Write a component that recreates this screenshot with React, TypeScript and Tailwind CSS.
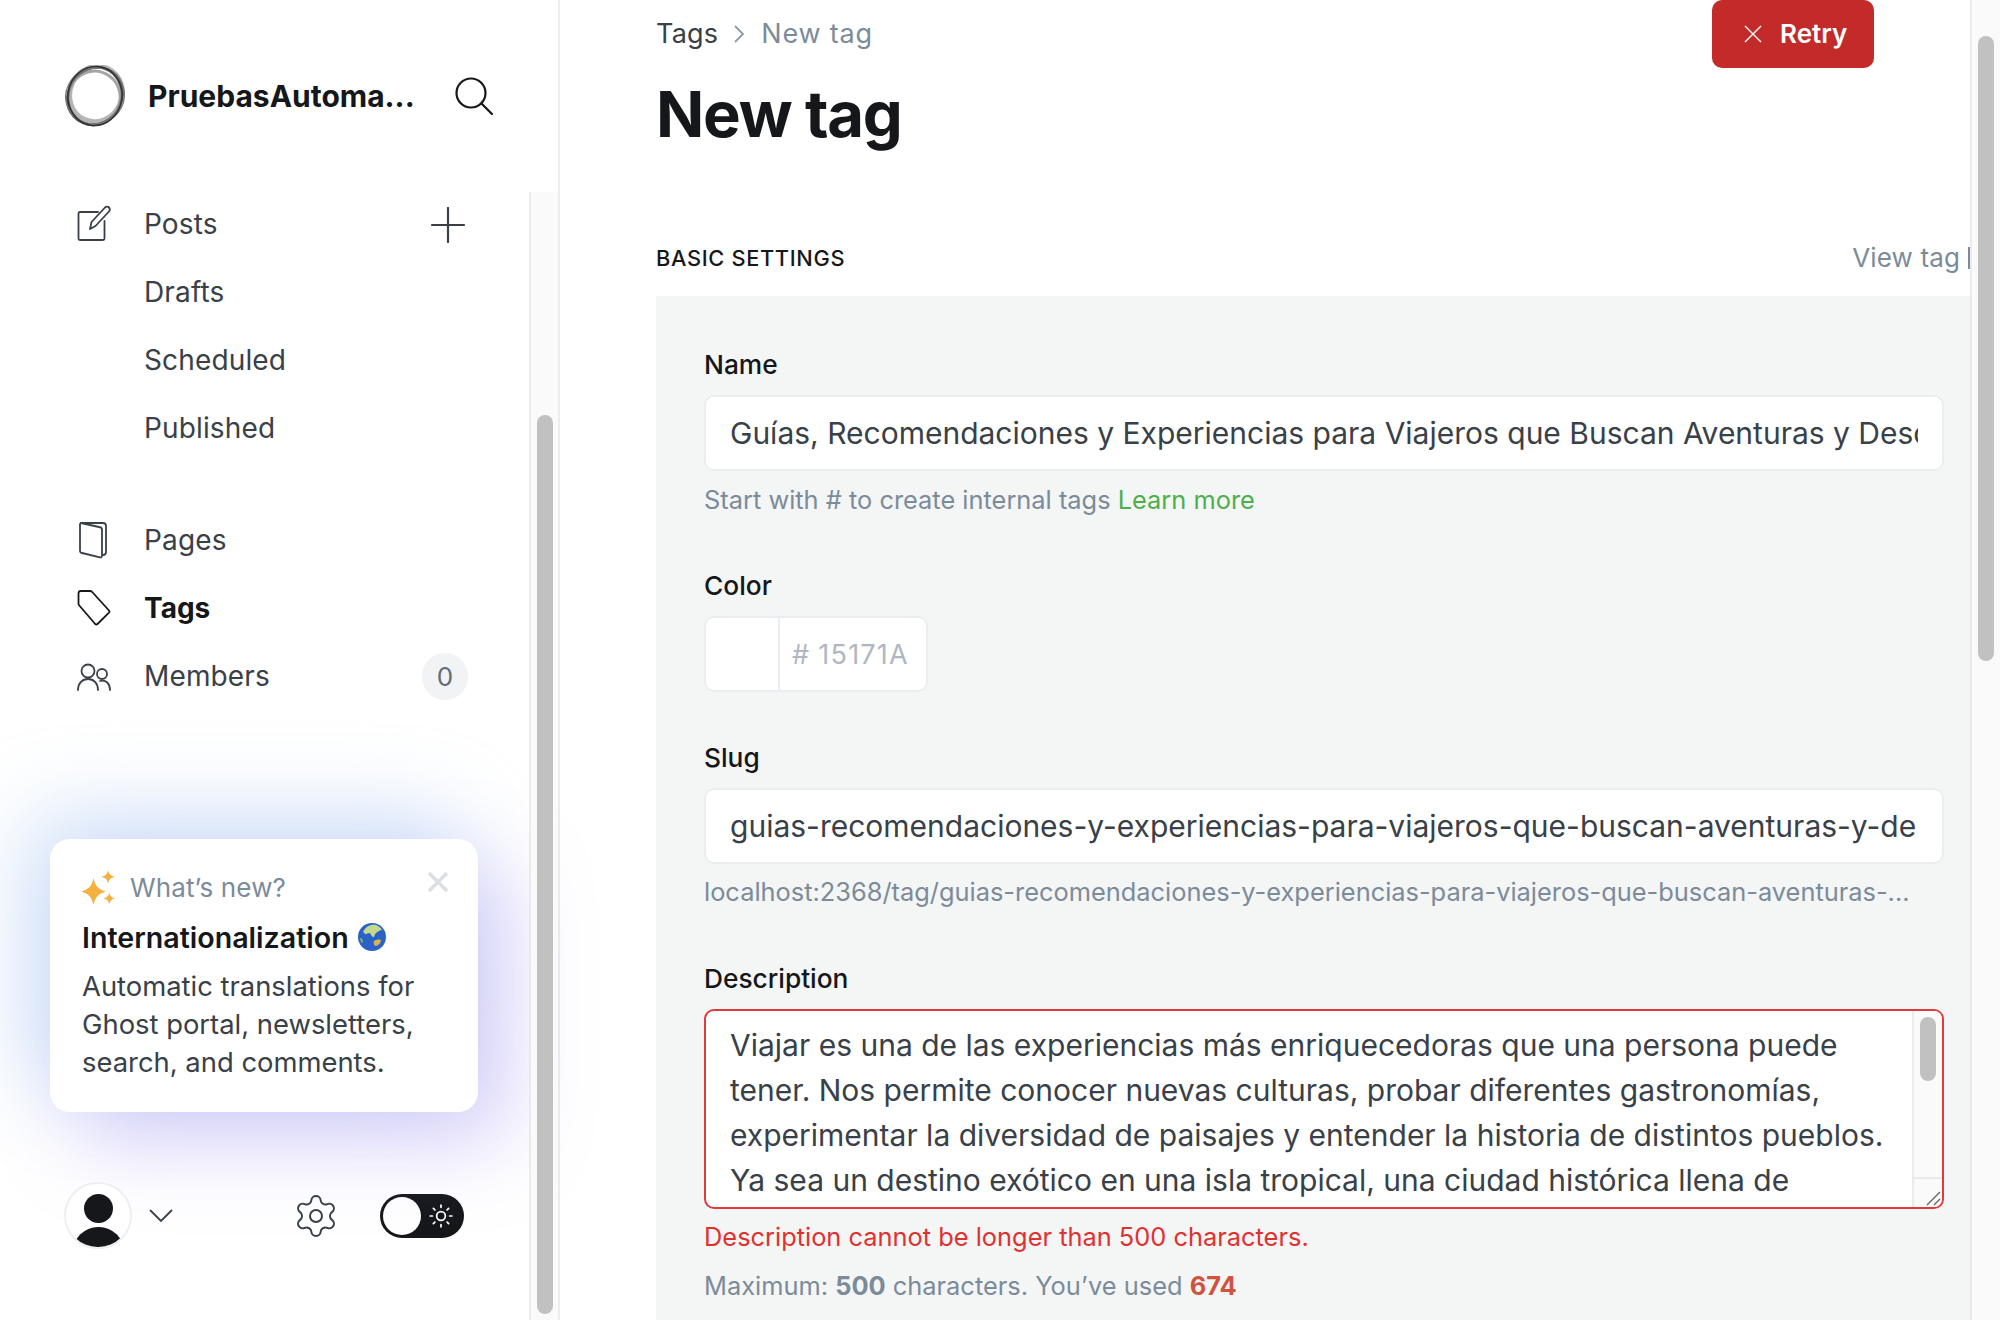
import React from "react";
import { Settings, Sun } from "lucide-react";

const font = { fontFamily: "Inter, 'Liberation Sans', sans-serif" };

function Logo() {
  return (
    <svg width="62" height="62" viewBox="0 0 62 62" fill="none" stroke="#555" strokeWidth="1.3">
      <ellipse cx="32" cy="29" rx="26" ry="28" transform="rotate(25 32 29)" stroke="#b5b5b5" strokeWidth="5" />
      <ellipse cx="30" cy="33" rx="26" ry="27" transform="rotate(25 30 33)" stroke="#a5a5a5" strokeWidth="3" />
      <ellipse cx="31" cy="31" rx="27" ry="30" transform="rotate(25 31 31)" />
      <ellipse cx="31" cy="31" rx="26.500" ry="30" transform="rotate(45 31 31)" stroke="#555" />
      <ellipse cx="31" cy="31" rx="28" ry="29.500" transform="rotate(70 31 31)" stroke="#777" />
      <ellipse cx="31" cy="31" rx="26" ry="28.500" transform="rotate(20 31 31)" stroke="#777" />
      <ellipse cx="31" cy="31" rx="27" ry="29.500" transform="rotate(8 31 31)" stroke="#333" strokeWidth="1.500" />
    </svg>
  );
}

function NavRow({ icon, label, bold, right }: { icon?: React.ReactNode; label: string; bold?: boolean; right?: React.ReactNode }) {
  return (
    <div className="flex h-[68px] items-center pr-[64px] pl-[77px]">
      <div className="flex w-[67px] items-center">{icon}</div>
      <span className={bold ? "text-[28px] font-bold text-[#15171a]" : "text-[28px] tracking-[0.005em] text-[#394047]"}>{label}</span>
      <div className="ml-auto flex items-center">{right}</div>
    </div>
  );
}

const iconProps = { width: 34, height: 38, viewBox: "0 0 34 38", fill: "none", stroke: "#394047", strokeWidth: 1.8, strokeLinecap: "round" as const, strokeLinejoin: "round" as const };

function Field({ label, children, className }: { label: string; children: React.ReactNode; className?: string }) {
  return (
    <div className={className}>
      <div className="mb-[13px] text-[26.300px] leading-[34px] font-medium text-[#15171a]">{label}</div>
      {children}
    </div>
  );
}

export default function App() {
  return (
    <div style={font} className="flex h-[1320px] w-[2000px] overflow-hidden bg-white">
      <aside className="flex h-full w-[560px] shrink-0 flex-col border-r-2 border-[#ebeef0]">
        <div className="flex h-[192px] shrink-0 items-center pr-[65px] pl-[64px]">
          <div className="flex w-full items-center">
            <Logo />
            <span className="ml-[22px] text-[30px] font-bold text-[#15171a]">PruebasAutoma...</span>
            <svg className="ml-auto" width="38" height="38" viewBox="0 0 38 38" fill="none" stroke="#15171a" strokeWidth="2.2" strokeLinecap="round">
              <circle cx="16" cy="16" r="14.5" />
              <path d="M26.5 26.5 37 37" />
            </svg>
          </div>
        </div>
        <div className="flex min-h-0 flex-1">
          <div className="relative flex min-w-0 flex-1 flex-col">
            <div className="-mt-[2px]">
              <NavRow
                label="Posts"
                icon={
                  <svg {...iconProps}>
                    <path d="M21 7H3a1.5 1.5 0 0 0-1.5 1.5v25A1.5 1.5 0 0 0 3 35h23a1.5 1.5 0 0 0 1.5-1.5V16" />
                    <path d="M13 24l1.5-7L28 2.5a2.8 2.8 0 0 1 4 0 2.8 2.8 0 0 1 0 4L18.5 21z" />
                  </svg>
                }
                right={
                  <svg className="mt-[1px]" width="34" height="36" viewBox="0 0 34 36" fill="none" stroke="#394047" strokeWidth="2.2" strokeLinecap="round">
                    <path d="M17 1v34M1 18h32" />
                  </svg>
                }
              />
              <NavRow label="Drafts" />
              <NavRow label="Scheduled" />
              <NavRow label="Published" />
            </div>
            <div className="mt-[44px]">
              <NavRow
                label="Pages"
                icon={
                  <svg {...iconProps}>
                    <path d="M4 2h22a3 3 0 0 1 3 3v26a3 3 0 0 1-3 3" />
                    <path d="M4 2l18 4a3 3 0 0 1 3 3v26a1.5 1.5 0 0 1-2 1.3L5 32a2 2 0 0 1-2-2V3" />
                  </svg>
                }
              />
              <NavRow
                label="Tags"
                bold
                icon={
                  <svg {...iconProps} stroke="#15171a">
                    <path d="M1.500 4.500A2.500 2.500 0 0 1 4 2h9a3 3 0 0 1 2.200 1L32 21.500a1.600 1.600 0 0 1 0 2.200L20.500 35a1.600 1.600 0 0 1-2.300 0L2.300 16.500a3 3 0 0 1-.8-2z" />
                  </svg>
                }
              />
              <NavRow
                label="Members"
                icon={
                  <svg {...iconProps}>
                    <circle cx="11" cy="14" r="6.500" />
                    <path d="M1 33c0-7 4.500-11 10-11s10 4 10 11" />
                    <circle cx="25" cy="17" r="5" />
                    <path d="M23 24c6-1.500 10 2.500 10 9" />
                  </svg>
                }
                right={
                  <span className="-mr-[3px] flex h-[47px] w-[46px] items-center justify-center rounded-full bg-[#f1f3f4] text-[26px] text-[#626d79]">0</span>
                }
              />
            </div>
            <div className="relative mt-[129px] ml-[50px] h-[273px] w-[428px] rounded-[20px] bg-white pt-[31px] pl-[32px] shadow-[-24px_-24px_84px_rgba(150,190,240,0.42),30px_30px_84px_rgba(165,145,240,0.42)]">
              <div className="flex items-center text-[26px] leading-[34px] tracking-[0.005em] text-[#7c8b9a]">
                <svg width="34" height="35" viewBox="2 1 30 31" fill="#f5b042" className="-ml-[1px] mr-[15px]">
                  <path d="M13 8c1.500 7 4 10 11 12-7 2-9.500 5-11 12-1.500-7-4-10-11-12 7-2 9.500-5 11-12z" />
                  <path d="M26 1c.7 3.500 2 5 6 6-4 1-5.300 2.500-6 6-.7-3.500-2-5-6-6 4-1 5.300-2.500 6-6z" />
                  <path d="M27 21c.6 3 1.700 4.300 5 5.300-3.300.9-4.400 2.200-5 5.200-.6-3-1.700-4.300-5-5.200 3.300-1 4.400-2.300 5-5.300z" />
                </svg>
                <span>What’s new?</span>
              </div>
              <svg className="absolute top-[32px] right-[29px]" width="22" height="22" viewBox="0 0 22 22" fill="none" stroke="#dcdfe2" strokeWidth="3.400">
                <path d="M2 2l18 18M20 2 2 20" />
              </svg>
              <div className="mt-[14px] flex items-center text-[28.600px] leading-[38px] font-semibold text-[#15171a]">
                <span>Internationalization</span>
                <svg className="ml-[9px] -mt-[2px]" width="28" height="28" viewBox="0 0 28 28">
                  <circle cx="14" cy="14" r="14" fill="#2a62c8" />
                  <path d="M5 9c3-6 8-8 13-7 3 1 5 3 6 5-3 0-4 2-6 3-2 2-1 4-3 4-2-1-2-4-4-4s-3 2-4 1-1-2-2-2z" fill="#c6d98a" />
                  <path d="M16 18c2-1 4-2 7-1 0 3-2 5-5 6-2 0-3-3-2-5z" fill="#d8b356" />
                  <path d="M2 15c2 0 3 2 3 4l-1 1c-1-1-2-3-2-5z" fill="#8fb26a" />
                </svg>
              </div>
              <div className="mt-[10px] text-[27.400px] leading-[38px] text-[#394047]">
                Automatic translations for
                <br />
                Ghost portal, newsletters,
                <br />
                search, and comments.
              </div>
            </div>
            <div className="mt-[70px] flex items-center pl-[64px]">
              <div className="relative h-[67px] w-[68px] overflow-hidden rounded-full border-2 border-[#eeeff1] bg-white">
                <div className="absolute top-[10px] left-[18px] h-[29px] w-[29px] rounded-full bg-[#15171a]" />
                <div className="absolute top-[43px] left-[7px] h-[50px] w-[51px] rounded-full bg-[#15171a]" />
              </div>
              <svg className="ml-[17px]" width="24" height="13" viewBox="0 0 24 13" fill="none" stroke="#394047" strokeWidth="1.800">
                <path d="M1 1l11 11L23 1" />
              </svg>
              <Settings className="ml-[119px]" size={48} strokeWidth={1} color="#394047" />
              <div className="ml-[40px] flex h-[44px] w-[84px] items-center rounded-full bg-[#15171a] pl-[3px]">
                <div className="h-[38px] w-[38px] rounded-full bg-white" />
                <Sun className="ml-[7px]" size={26} strokeWidth={1.6} color="#ffffff" />
              </div>
            </div>
          </div>
          <div className="relative h-full w-[29px] shrink-0 border-l-2 border-[#ebebeb] bg-[#fafafa] pt-[223px]">
            <div className="ml-[6px] h-[899px] w-[16px] rounded-full bg-[#c1c1c1]" />
          </div>
        </div>
      </aside>
      <main className="flex min-w-0 flex-1">
        <div className="min-w-0 flex-1 overflow-hidden pl-[97px]">
          <div className="flex h-[68px] items-center">
            <span className="-ml-[1px] text-[27px] tracking-[0.008em] text-[#394047]">Tags</span>
            <svg className="mr-[16px] ml-[15px]" width="12" height="20" viewBox="0 0 12 20" fill="none" stroke="#8e9aa6" strokeWidth="1.800">
              <path d="M2 2l8 8-8 8" />
            </svg>
            <span className="text-[27px] tracking-[0.03em] text-[#7c8b9a]">New tag</span>
            <div className="mr-[96px] ml-auto flex h-[68px] w-[162px] items-center rounded-[10px] bg-[#c32a2a] pl-[31px] text-[26px] font-semibold text-white">
              <svg width="20" height="20" viewBox="0 0 20 20" fill="none" stroke="#fff" strokeWidth="1.400">
                <path d="M2 2l16 16M18 2 2 18" />
              </svg>
              <span className="ml-[17px] -mt-[1px]">Retry</span>
            </div>
          </div>
          <h1 className="mt-[4px] -ml-[1px] text-[63.400px] leading-[84px] font-bold tracking-[-0.02em] text-[#15171a]">New tag</h1>
          <div className="mt-[82px] -ml-[1px] flex h-[40px] items-center justify-between overflow-hidden">
            <span className="text-[21.800px] font-medium tracking-[0.03em] text-[#15171a]">BASIC SETTINGS</span>
            <div className="-mt-[1px] flex items-center">
              <span className="text-[26px] tracking-[0.005em] whitespace-nowrap text-[#7c8b9a]">View tag</span>
              <div className="ml-[8px] h-[22px] w-[2px] bg-[#7c8b9a]" />
            </div>
          </div>
          <div className="mt-[18px] -ml-[1px] h-[1100px] bg-[#f4f5f5] pt-[52px] pr-[26px] pl-[48px]">
            <Field label="Name">
              <div className="flex h-[76px] items-center rounded-[10px] border-2 border-[#ebeef0] bg-white pr-[24px] pl-[24px]">
                <div className="w-full overflow-hidden text-[30px] whitespace-nowrap text-[#394047]">
                  Guías, Recomendaciones y Experiencias para Viajeros que Buscan Aventuras y Descubrimientos
                </div>
              </div>
              <div className="mt-[12px] text-[25.400px] leading-[34px] text-[#7c8b9a]">
                Start with # to create internal tags <span className="text-[#4cb04c]">Learn more</span>
              </div>
            </Field>
            <Field label="Color" className="mt-[52px]">
              <div className="flex h-[76px] w-[224px] rounded-[10px] border-2 border-[#ebeef0] bg-white">
                <div className="h-full w-[74px] border-r-2 border-[#ebeef0]" />
                <div className="flex items-center pt-[2px] pl-[12px] text-[27px] tracking-[0.045em] text-[#aeb7c2]">
                  <span className="mr-[8px]">#</span>15171A
                </div>
              </div>
            </Field>
            <Field label="Slug" className="mt-[49px]">
              <div className="flex h-[76px] items-center rounded-[10px] border-2 border-[#ebeef0] bg-white pr-[24px] pl-[24px]">
                <div className="w-full overflow-hidden text-[30px] whitespace-nowrap text-[#394047]">
                  guias-recomendaciones-y-experiencias-para-viajeros-que-buscan-aventuras-y-descubrimientos
                </div>
              </div>
              <div className="mt-[11px] text-[25.400px] leading-[34px] text-[#7c8b9a]">
                localhost:2368/tag/guias-recomendaciones-y-experiencias-para-viajeros-que-buscan-aventuras-...
              </div>
            </Field>
            <Field label="Description" className="mt-[53px]">
              <div className="relative h-[200px] overflow-hidden rounded-[10px] border-2 border-[#e03b3b] bg-white pt-[12px] pl-[24px]">
                <div className="text-[30px] leading-[45px] whitespace-nowrap text-[#394047]">
                  Viajar es una de las experiencias más enriquecedoras que una persona puede
                  <br />
                  tener. Nos permite conocer nuevas culturas, probar diferentes gastronomías,
                  <br />
                  experimentar la diversidad de paisajes y entender la historia de distintos pueblos.
                  <br />
                  Ya sea un destino exótico en una isla tropical, una ciudad histórica llena de
                </div>
                <div className="absolute top-0 right-0 bottom-0 w-[30px] border-l-2 border-[#ebebeb] bg-[#fafafa] pt-[6px]">
                  <div className="ml-[6px] h-[64px] w-[16px] rounded-full bg-[#c1c1c1]" />
                  <div className="absolute right-0 bottom-0 h-[30px] w-[30px] border-t-2 border-[#ebebeb]">
                    <svg className="absolute right-[1px] bottom-[1px]" width="16" height="16" viewBox="0 0 16 16" fill="none" stroke="#666" strokeWidth="1.400">
                      <path d="M2 15 15 2M9 15l6-6" />
                    </svg>
                  </div>
                </div>
              </div>
              <div className="mt-[11px] text-[25.400px] leading-[34px] text-[#e03131]">Description cannot be longer than 500 characters.</div>
              <div className="mt-[15px] text-[25.400px] leading-[34px] text-[#7c8b9a]">
                Maximum: <b className="font-bold">500</b> characters. You’ve used <b className="font-bold text-[#d0533f]">674</b>
              </div>
            </Field>
          </div>
        </div>
        <div className="h-full w-[30px] shrink-0 border-l-2 border-[#ebebeb] bg-[#fafafa] pt-[36px]">
          <div className="ml-[6px] h-[625px] w-[16px] rounded-full bg-[#c1c1c1]" />
        </div>
      </main>
    </div>
  );
}
